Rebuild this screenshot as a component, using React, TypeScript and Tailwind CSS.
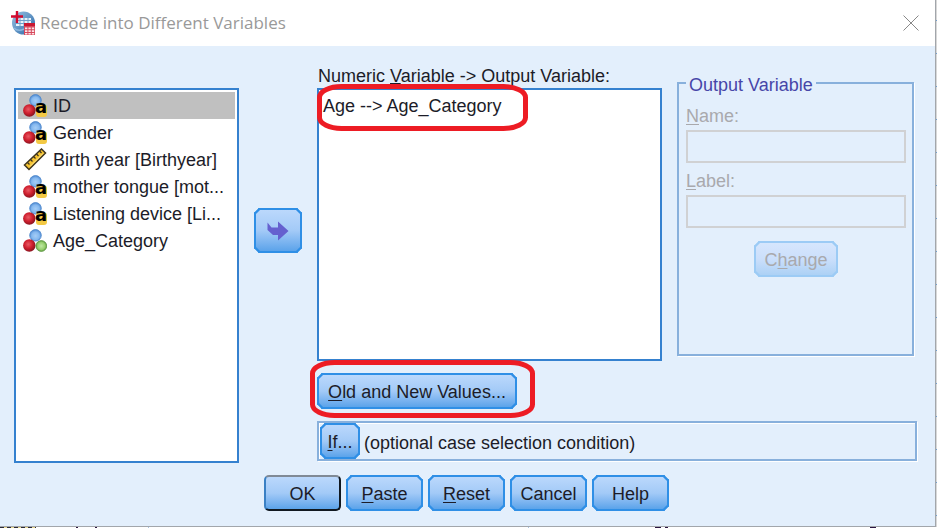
import React from "react";
import clsx from "clsx";

type Kind = "string" | "scale" | "nominal";

const variables: { name: string; kind: Kind }[] = [
  { name: "ID", kind: "string" },
  { name: "Gender", kind: "string" },
  { name: "Birth year [Birthyear]", kind: "scale" },
  { name: "mother tongue [mot...", kind: "string" },
  { name: "Listening device [Li...", kind: "string" },
  { name: "Age_Category", kind: "nominal" },
];

function Gradients() {
  return (
    <svg className="absolute h-0 w-0" aria-hidden="true">
      <defs>
        <radialGradient id="blueBall" cx="50%" cy="55%" r="55%">
          <stop offset="0" stopColor="#a5cdf6" />
          <stop offset="0.6" stopColor="#85b8ef" />
          <stop offset="1" stopColor="#4a86cf" />
        </radialGradient>
        <radialGradient id="redBall" cx="42%" cy="40%" r="60%">
          <stop offset="0" stopColor="#e85a64" />
          <stop offset="0.55" stopColor="#d0202f" />
          <stop offset="1" stopColor="#8c1420" />
        </radialGradient>
        <radialGradient id="greenBall" cx="50%" cy="50%" r="55%">
          <stop offset="0" stopColor="#c0e8a4" />
          <stop offset="0.6" stopColor="#98d070" />
          <stop offset="1" stopColor="#559438" />
        </radialGradient>
        <linearGradient id="globe" x1="0" y1="0" x2="1" y2="1">
          <stop offset="0" stopColor="#9cc4e4" />
          <stop offset="1" stopColor="#2766a6" />
        </linearGradient>
      </defs>
    </svg>
  );
}

function VariableIcon({ kind }: { kind: Kind }) {
  if (kind === "scale") {
    return (
      <svg viewBox="0 0 24 24" className="size-6 shrink-0" aria-hidden="true">
        <path d="M1.5 17 L18.5 1 L22.5 5 L6 21.5 Z" fill="#f5c330" stroke="#3f3620" strokeWidth="1.5" />
        <path d="M4.5 14.5l2 2M7.5 11.5l2 2M10.5 8.5l2 2M13.5 6l2 2M16.5 3l2 2" stroke="#3f3620" strokeWidth="1.3" />
        <path d="M7 18.5l13-13" stroke="#fbe38a" strokeWidth="1" />
      </svg>
    );
  }
  return (
    <span className="relative size-6 shrink-0">
      <svg viewBox="0 0 24 24" className="size-6" aria-hidden="true">
        <circle cx="12.5" cy="6.3" r="5.8" fill="url(#blueBall)" stroke="#4b87cc" strokeWidth="0.8" />
        <circle cx="6.3" cy="16.5" r="6.2" fill="url(#redBall)" />
        {kind === "nominal" ? (
          <circle cx="18.3" cy="17" r="5.4" fill="url(#greenBall)" stroke="#5a963f" strokeWidth="0.8" />
        ) : (
          <rect x="13" y="10.5" width="11" height="12.5" rx="3" fill="#f3c944" />
        )}
      </svg>
      {kind === "string" && (
        <span className="absolute top-[3px] left-3 font-['DejaVu_Sans',sans-serif] text-[18px] leading-5 font-bold text-black">
          a
        </span>
      )}
    </span>
  );
}

function AppIcon() {
  return (
    <svg viewBox="0 0 24 24" className="size-6 shrink-0" aria-hidden="true">
      <circle cx="12.5" cy="12" r="11.5" fill="url(#globe)" />
      <path d="M8 7h12v8H5v-5z" fill="#e9f2fa" />
      <path d="M5 9.5h16M5 12.5h16M9 7v8M13 6v9M17 6v9" stroke="#6f9fca" strokeWidth="1" />
      <path d="M3 17c3 3 6 3 10 1" stroke="#8db8de" strokeWidth="1.6" fill="none" />
      <path d="M0 5.5h12M6 0v12" stroke="#d20a2e" strokeWidth="2.4" />
      <rect x="13" y="12" width="11" height="12" fill="#d6485c" />
      <path d="M13 13.5h11" stroke="#c81832" strokeWidth="3" />
      <path d="M14 16.6h2.4v1.6H14zM17.4 16.6h2.4v1.6h-2.4zM20.8 16.6h2.4v1.6h-2.4zM14 19.3h2.4v1.6H14zM17.4 19.3h2.4v1.6h-2.4zM20.8 19.3h2.4v1.6h-2.4zM14 22h2.4v1.4H14zM17.4 22h2.4v1.4h-2.4zM20.8 22h2.4v1.4h-2.4z" fill="#fbe4e7" />
    </svg>
  );
}

function PushButton({
  className,
  children,
  ...rest
}: React.ButtonHTMLAttributes<HTMLButtonElement>) {
  return (
    <button
      type="button"
      className={clsx(
        "flex h-9 items-center justify-center rounded-[5px] border-2 bg-linear-to-b from-[#bbd8fc] via-[#a3caf7] to-[#5ba3ea] pt-[2px] whitespace-nowrap [corner-shape:bevel]",
        className,
      )}
      {...rest}
    >
      {children}
    </button>
  );
}

function Key({ children }: { children: string }) {
  return <span className="underline decoration-1 underline-offset-2">{children}</span>;
}

function Mark({ className, width, height }: { className: string; width: number; height: number }) {
  return (
    <svg
      className={clsx("pointer-events-none absolute overflow-visible", className)}
      width={width}
      height={height}
      aria-hidden="true"
    >
      <rect
        x="2.5"
        y="2.5"
        width={width - 5}
        height={height - 5}
        rx="22"
        ry="11"
        fill="none"
        stroke="#ed1c24"
        strokeWidth="5"
      />
    </svg>
  );
}

export default function App() {
  return (
    <div className="flex min-h-screen flex-col overflow-hidden bg-white font-['Liberation_Sans',Arial,sans-serif] text-[18px] leading-6 text-[#1c1c28]">
      <Gradients />
      <div className="flex flex-1">
        <main className="flex min-w-0 flex-1 flex-col border-r border-b border-[#a2a6ab] bg-[#e3effc]">
          <header className="flex h-[46px] items-center bg-white pr-4 pl-[11px]">
            <AppIcon />
            <h1 className="ml-[5px] flex-1 font-['Open_Sans','Noto_Sans',sans-serif] text-[17px] font-normal text-[#999999]">
              Recode into Different Variables
            </h1>
            <button type="button" aria-label="Close" className="flex size-4 items-center justify-center">
              <svg viewBox="0 0 16 16" className="size-4" aria-hidden="true">
                <path d="M0.5 0.5l15 15M15.5 0.5l-15 15" stroke="#888" strokeWidth="1" />
              </svg>
            </button>
          </header>

          <div className="flex gap-[15px] pt-[18px] pr-[18px] pl-[14px]">
            <ul className="mt-6 flex h-[375px] w-[225px] shrink-0 flex-col border-2 border-[#3581cf] bg-white p-[2px]">
              {variables.map((v, i) => (
                <li
                  key={v.name}
                  className={clsx("flex h-[27px] items-center gap-[6px] pl-[5px] whitespace-nowrap", i === 0 && "bg-[#c0c0c0]")}
                >
                  <VariableIcon kind={v.kind} />
                  <span>{v.name}</span>
                </li>
              ))}
            </ul>

            <div className="flex flex-col pt-36">
              <button
                type="button"
                aria-label="Move variable"
                className="flex h-[45px] w-12 items-center justify-center rounded-[5px] border-2 border-[#2f8fe6] bg-linear-to-b from-[#bbd8fc] via-[#a3caf7] to-[#5ba3ea] [corner-shape:bevel]"
              >
                <svg viewBox="0 0 22 20" className="h-5 w-[22px]" aria-hidden="true">
                  <path d="M0.5 1.5 L4.5 6.5 H11 V0.5 L21.5 10 L11 19.5 V14 H6 L0.5 9 Z" fill="#6560cf" />
                </svg>
              </button>
            </div>

            <div className="flex min-w-0 flex-1 flex-col">
              <div className="flex gap-[15px] pr-[3px]">
                <div className="relative min-w-0 flex-1">
                  <div id="mapping" className="h-6 pl-[1px] whitespace-nowrap">
                    Numeric <span className="underline decoration-1 underline-offset-1">V</span>ariable -&gt; Output Variable:
                  </div>
                  <ul aria-labelledby="mapping" className="h-[273px] border-2 border-[#3581cf] bg-white px-1 py-1">
                    <li>Age --&gt; Age_Category</li>
                  </ul>
                  <Mark className="top-5 left-0" width={211} height={47} />
                </div>

                <fieldset
                  disabled
                  className="mt-[5px] h-[287px] w-[237px] shrink-0 border-2 border-[#88b0dc] pr-[6px] pl-[7px] text-[#a9a9ad] shadow-[1px_1px_0_#ffffff]"
                >
                  <legend className="px-[3px] pt-1 text-[#4746a8]">Output Variable</legend>
                  <label htmlFor="out-name" className="mt-[7px] block">
                    <Key>N</Key>ame:
                  </label>
                  <input id="out-name" className="mt-[2px] block h-[33px] w-full border-2 border-[#d0d1d3] bg-transparent px-1" />
                  <label htmlFor="out-label" className="mt-[6px] block">
                    <Key>L</Key>abel:
                  </label>
                  <input id="out-label" className="mt-[2px] block h-[33px] w-full border-2 border-[#d0d1d3] bg-transparent px-1" />
                  <PushButton disabled className="mx-auto mt-[13px] w-[84px] border-[#9ccbf5] from-[#d6e6fd] via-[#cbdffb] to-[#acd1f5]">
                    <span>
                      C<Key>h</Key>ange
                    </span>
                  </PushButton>
                </fieldset>
              </div>

              <div className="relative mt-3 flex">
                <PushButton className="w-[200px] border-[#2f8fe6]">
                  <span>
                    <Key>O</Key>ld and New Values...
                  </span>
                </PushButton>
                <Mark className="-top-[13px] -left-[7px]" width={225} height={58} />
              </div>

              <div className="mt-3 flex h-10 items-center border-2 border-[#88b0dc] pl-[1px] shadow-[1px_1px_0_#ffffff,inset_1px_1px_0_#ffffff]">
                <PushButton className="w-10 border-[#2f8fe6]">
                  <span>
                    <Key>I</Key>f...
                  </span>
                </PushButton>
                <span className="ml-1 pt-[3px] whitespace-nowrap">(optional case selection condition)</span>
              </div>
            </div>
          </div>

          <footer className="flex justify-center gap-[5px] pt-3 pr-[2px] pb-[15px]">
            <PushButton className="w-[77px] border-t-[#808a96] border-r-[#101820] border-b-[#101820] border-l-[#3a80c4] [corner-shape:round]!">
              OK
            </PushButton>
            <PushButton className="w-[77px] border-[#2f8fe6]">
              <span>
                <Key>P</Key>aste
              </span>
            </PushButton>
            <PushButton className="w-[77px] border-[#2f8fe6]">
              <span>
                <Key>R</Key>eset
              </span>
            </PushButton>
            <PushButton className="w-[77px] border-[#2f8fe6]">Cancel</PushButton>
            <PushButton className="w-[77px] border-[#2f8fe6]">Help</PushButton>
          </footer>
        </main>
        <div className="w-px bg-[repeating-linear-gradient(to_bottom,#d8d8d8_0px,#d8d8d8_20px,#6f9fd0_20px,#6f9fd0_21px,#d8d8d8_21px,#d8d8d8_33px)]" />
      </div>
      <div className="flex h-px items-start bg-white">
        <div className="h-px w-9 bg-[repeating-linear-gradient(to_right,#2a2a38_0px,#2a2a38_4px,#e8d890_4px,#e8d890_7px)]" />
        <div className="ml-10 h-px w-[2px] bg-[#2a1440]" />
        <div className="ml-[17px] h-px w-[2px] bg-[#2a1440]" />
        <div className="ml-[51px] h-px w-px bg-[#a8c4e4]" />
        <div className="ml-[379px] h-px w-px bg-[#a8c4e4]" />
        <div className="ml-[126px] h-px w-[6px] bg-[#2a1440]" />
        <div className="ml-1 h-px w-[3px] bg-[#2a1440]" />
        <div className="ml-[202px] h-px w-[6px] bg-[#2a1440]" />
      </div>
    </div>
  );
}
